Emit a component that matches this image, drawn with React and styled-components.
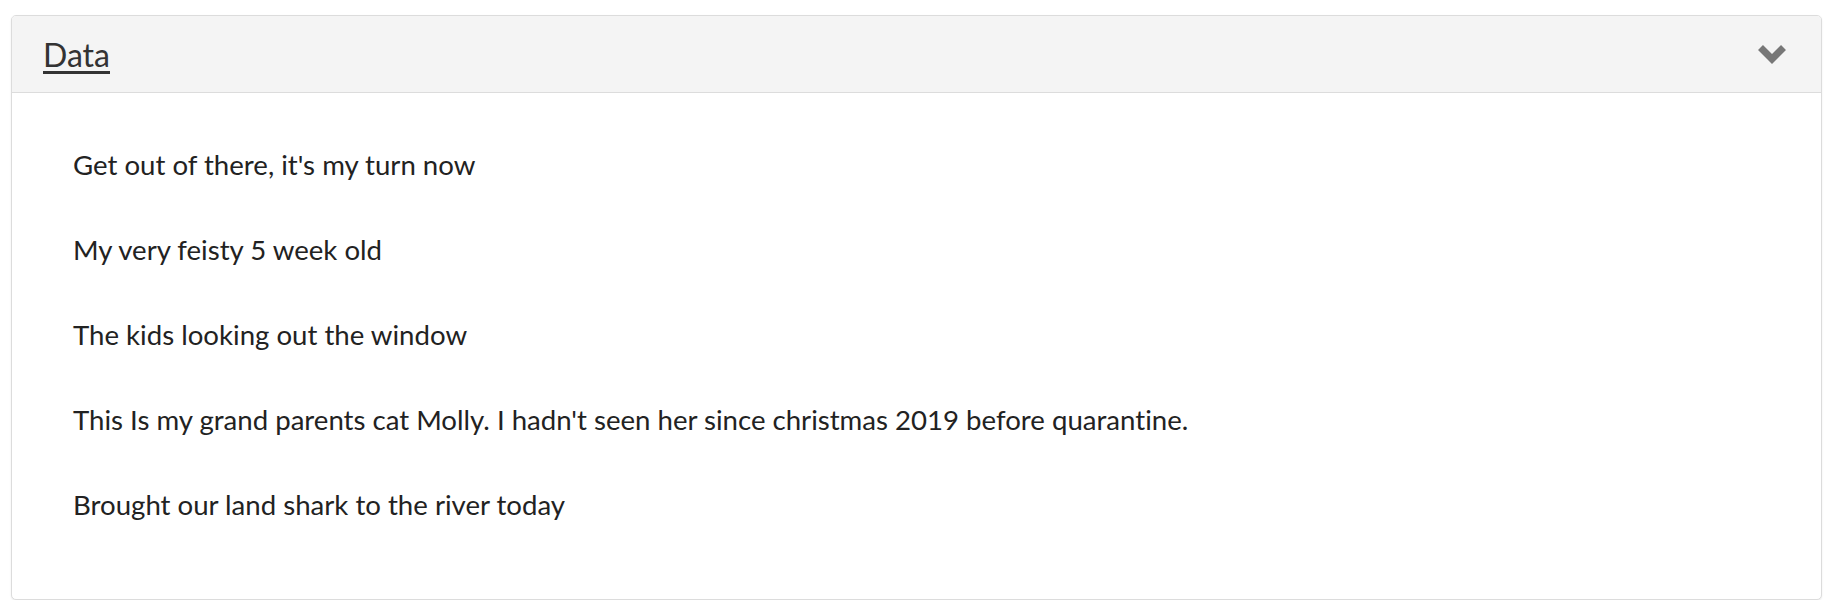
import styled, { createGlobalStyle } from "styled-components"

const GlobalStyle = createGlobalStyle`
    body {
        margin: 0;
        background: #fff;
        font-family: Lato, "Open Sans", sans-serif;
        font-variant-ligatures: no-common-ligatures;
    }
`

const items = [
    "Get out of there, it's my turn now",
    "My very feisty 5 week old",
    "The kids looking out the window",
    "This Is my grand parents cat Molly. I hadn't seen her since christmas 2019 before quarantine.",
    "Brought our land shark to the river today",
]

function Chevron(){
    return(
        <svg width="30" height="21" viewBox="0 0 30 21">
            <polyline points="3.5,3.5 15,15 26.5,3.5" fill="none" stroke="#777" strokeWidth="7" strokeLinejoin="miter" />
        </svg>
    )
}

function App(){
    return(
        <>
        <GlobalStyle />
        <Page>
            <Panel>
                <Heading>
                    <Title href="#">Data</Title>
                    <Chevron />
                </Heading>
                <Body>
                    {items.map(text => <Item key={text}>{text}</Item>)}
                </Body>
            </Panel>
        </Page>
        </>
    )
}

export default App

//Style section

const Page = styled.div`
    padding: 15px 14px 0 11px;
`

const Panel = styled.div`
    border: 1px solid #dcdcdc;
    border-radius: 5px;
    box-shadow: 0 1px 2px rgba(0,0,0,0.08);
    overflow: hidden;
    background: #fff;
`

const Heading = styled.div`
    display: flex;
    align-items: center;
    justify-content: space-between;
    height: 77px;
    padding: 0 34px 0 31px;
    background: #f4f4f4;
    border-bottom: 1px solid #dcdcdc;
    box-sizing: border-box;
`

const Title = styled.a`
    font-size: 32px;
    line-height: 1;
    margin-top: 2px;
    color: #333;
    text-decoration: underline;
    text-underline-offset: 4px;
`

const Body = styled.div`
    display: flex;
    flex-direction: column;
    gap: 45px;
    padding: 52px 40px 74px 61px;
`

const Item = styled.div`
    font-size: 27.6px;
    line-height: 40px;
    color: #222;
`
